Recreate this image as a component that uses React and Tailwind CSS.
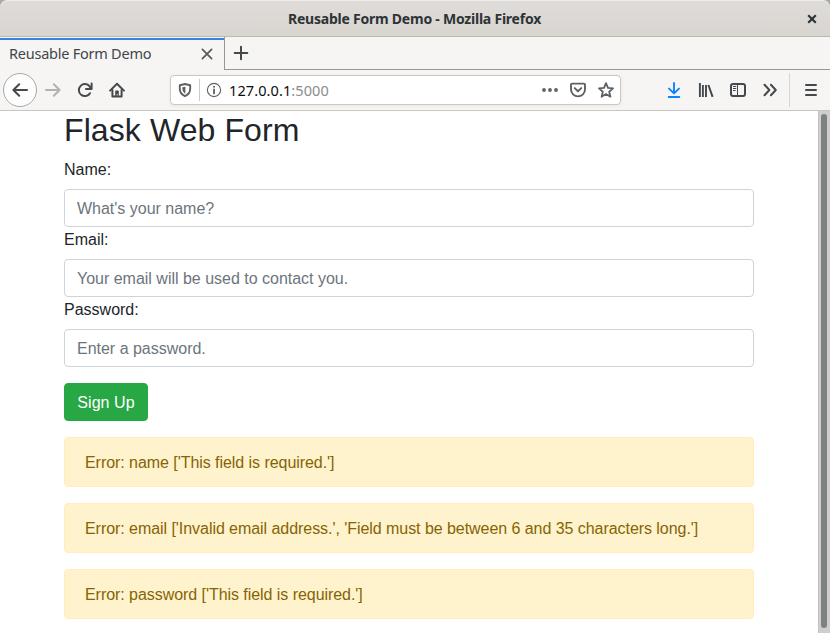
import React from "react";

const chromeFont = "font-['Noto_Sans','Open_Sans',sans-serif]";

function Icon({ children, className = "", size = 16 }) {
  return (
    <svg
      width={size}
      height={size}
      viewBox={`0 0 ${size} ${size}`}
      fill="none"
      stroke="currentColor"
      strokeWidth="2"
      strokeLinecap="round"
      strokeLinejoin="round"
      className={`block shrink-0 ${className}`}
    >
      {children}
    </svg>
  );
}

function TitleBar() {
  return (
    <div className="bg-[#aaa8a5]">
      <div className="flex h-[37px] items-center rounded-t-[7px] border-t border-b border-t-[#efedec] border-b-[#bfb8b1] bg-linear-to-b from-[#e0dcd9] to-[#d8d4d0] pr-[13px] pl-[288px] text-[#2e3436]">
        <span className="w-[260px] text-[14px] leading-5 font-bold tracking-[-0.23px] whitespace-nowrap">
          Reusable Form Demo - Mozilla Firefox
        </span>
        <svg width="10" height="10" viewBox="0 0 10 10" className="ml-auto block" stroke="currentColor" strokeWidth="2.2">
          <path d="M1.2 1.2l7.6 7.6M8.8 1.2L1.2 8.8" />
        </svg>
      </div>
    </div>
  );
}

function TabStrip() {
  return (
    <div className="flex h-[33px] bg-[#f6f5f4]">
      <div className="flex w-[225px] flex-col border-r border-[#999794] pt-px">
        <div className="h-[2px] bg-[#3584e4]" />
        <div className="flex h-[29px] items-center justify-between pr-[9px] pb-[2px] pl-[9px] text-[#40464a]">
          <span className="pb-[2px] text-[14.5px] leading-5 tracking-[-0.24px] whitespace-nowrap">Reusable Form Demo</span>
          <Icon className="text-[#54595c]">
            <path d="M3.4 3.4l9.2 9.2M12.6 3.4l-9.2 9.2" strokeWidth="1.7" />
          </Icon>
        </div>
      </div>
      <div className="flex flex-1 border-b border-[#999794] pt-2 pl-2">
        <Icon className="text-[#45494c]">
          <path d="M8 1.7v12.6M1.7 8h12.6" />
        </Icon>
      </div>
    </div>
  );
}

function AddressBar() {
  return (
    <div className="ml-[45px] flex h-[30px] w-[451px] items-center rounded-[4px] border border-[#cdc7c2] bg-white pr-[6px] pl-[6px] text-[#5f6062] shadow-[0_1px_4px_rgba(0,0,0,0.06)]">
      <Icon>
        <path d="M8 2l5.2 1.2v3.6c0 3.4-2 5.9-5.2 7.4-3.2-1.5-5.2-4-5.2-7.4V3.2z" strokeWidth="1.9" />
        <path d="M8.4 4.8v6.9C6.4 10.6 5.4 8.9 5.4 6.8V5.3z" fill="currentColor" stroke="none" />
      </Icon>
      <div className="ml-[6px] h-[22px] w-px bg-[#cbcbcb]" />
      <Icon className="ml-[6px]">
        <circle cx="8" cy="8" r="6.6" strokeWidth="1.1" />
        <path d="M8 7.4v4" strokeWidth="1.8" />
        <circle cx="8" cy="4.8" r="1" fill="currentColor" stroke="none" />
      </Icon>
      <span className="ml-[7px] text-[14.5px] leading-5 tracking-[0.1px] text-[#8b8b8b]">
        <span className="text-[#0c0c0d]">127.0.0.1</span>:5000
      </span>
      <div className="ml-auto flex gap-3">
        <Icon>
          <g fill="currentColor" stroke="none">
            <circle cx="2" cy="8" r="1.9" />
            <circle cx="8" cy="8" r="1.9" />
            <circle cx="14" cy="8" r="1.9" />
          </g>
        </Icon>
        <Icon>
          <path d="M2 1.6h12c.6 0 1 .4 1 1v5a7 6.8 0 0 1-14 0v-5c0-.6.4-1 1-1z" strokeWidth="1.9" />
          <path d="M4.7 6.1L8 9.3l3.3-3.2" strokeWidth="1.9" />
        </Icon>
        <Icon>
          <path d="M8 1.2l2 4.7 5 .5-3.8 3.3 1.2 5L8 12.1l-4.4 2.6 1.2-5L1 6.4l5-.5z" strokeWidth="1.8" />
        </Icon>
      </div>
    </div>
  );
}

function Toolbar() {
  return (
    <div className="flex h-[41px] items-center border-b border-[#c9c5c0] bg-[#f6f5f4] text-[#45494c]">
      <div className="ml-[3px] flex h-[34px] w-[34px] shrink-0 items-center justify-center rounded-full border border-[#aaa9a7] bg-[#fdfdfd]">
        <Icon>
          <path d="M15 8H1.7M7.2 2.2L1.4 8l5.8 5.8" />
        </Icon>
      </div>
      <div className="ml-2 flex gap-4">
        <Icon className="text-[#b3b2b1]">
          <path d="M1 8h13.3M8.8 2.2L14.6 8l-5.8 5.8" />
        </Icon>
        <Icon>
          <path d="M13 11.2A6 6 0 1 1 12.6 4.4L14 6.3" />
          <path d="M14.6 1.4v5.5H9" />
        </Icon>
        <Icon>
          <path d="M1.1 8.6L8 1.8l6.9 6.8" />
          <path d="M3.4 8v6.6h9.2V8" />
          <path d="M6.2 15V9.4c0-.5.3-.9.8-.9h2c.5 0 .8.4.8.9V15z" fill="currentColor" stroke="none" />
          <path d="M8.2 12.2v1.2" stroke="#f6f5f4" strokeWidth="1" strokeLinecap="butt" />
        </Icon>
      </div>
      <AddressBar />
      <div className="ml-[45px] flex gap-4">
        <Icon className="text-[#0a84ff]">
          <path d="M8 1v10.2M3 6.6l5 4.8 5-4.8M2.7 15h10.6" strokeWidth="1.9" />
        </Icon>
        <Icon>
          <g strokeLinecap="butt">
            <path d="M1.9 1v14M4.9 3v12M8 3v12" strokeWidth="1.9" />
            <path d="M10.4 3L14.6 14.8" strokeWidth="2" />
          </g>
        </Icon>
        <Icon>
          <rect x="1" y="2" width="14" height="12" rx="2" />
          <path d="M7.5 2v12" strokeWidth="1" />
          <path d="M3.4 4.5H5.8M3.4 6.5H5.8M3.4 8.5H5.2" strokeWidth="1" />
        </Icon>
        <Icon>
          <path d="M2.5 2.8L7.4 8l-4.9 5.2M8.9 2.8L13.8 8l-4.9 5.2" />
        </Icon>
      </div>
      <div className="ml-[11px] h-[34px] w-px bg-[#d8d6d4]" />
      <Icon className="ml-[13px]">
        <path d="M3 3h10M3 8h10M3 13h10" />
      </Icon>
    </div>
  );
}

const fields = [
  { label: "Name:", type: "text", placeholder: "What's your name?" },
  { label: "Email:", type: "text", placeholder: "Your email will be used to contact you." },
  { label: "Password:", type: "password", placeholder: "Enter a password." },
];

const errors = [
  "Error: name ['This field is required.']",
  "Error: email ['Invalid email address.', 'Field must be between 6 and 35 characters long.']",
  "Error: password ['This field is required.']",
];

function Page() {
  return (
    <div className="flex h-[522px] overflow-hidden bg-white font-['Liberation_Sans',Arial,sans-serif] text-[#212529]">
      <main className="w-[818px] shrink-0 pl-[64px]">
        <div className="w-[690px]">
          <h2 className="mb-2 text-[32px] leading-[1.2] font-medium tracking-[0.1px]">Flask Web Form</h2>
          <form className="mb-4">
            {fields.map((f) => (
              <div key={f.label}>
                <label className="mb-[7px] block pt-px text-base leading-6">{f.label}</label>
                <input
                  type={f.type}
                  placeholder={f.placeholder}
                  className="block h-[38px] w-full rounded-[4px] border border-[#ced4da] bg-white px-3 pt-[7px] pb-[5px] text-base leading-6 tracking-[-0.01px] placeholder:text-[#6c757d]"
                />
              </div>
            ))}
            <button type="button" className="mt-4 block h-[38px] w-[84px] rounded-[4px] border border-[#28a745] bg-[#28a745] pt-[7px] pb-[5px] text-base leading-6 tracking-[0.08px] text-white">
              Sign Up
            </button>
          </form>
          {errors.map((e) => (
            <div key={e} className="mb-4 rounded-[4px] border border-[#ffeeba] bg-[#fff3cd] px-5 pt-[13px] pb-[11px] text-base leading-6 tracking-[-0.052px] text-[#856404]">
              {e}
            </div>
          ))}
        </div>
      </main>
      <div className="w-3 border-l border-[#c9c0b8] bg-[#cecece] pt-[3px] pl-[2px]">
        <div className="h-[514px] w-[6px] rounded-full bg-[#7e8181]" />
      </div>
    </div>
  );
}

export default function App() {
  return (
    <div className="h-[633px] w-[830px] overflow-hidden">
      <div className={chromeFont}>
        <TitleBar />
        <TabStrip />
        <Toolbar />
      </div>
      <Page />
    </div>
  );
}
